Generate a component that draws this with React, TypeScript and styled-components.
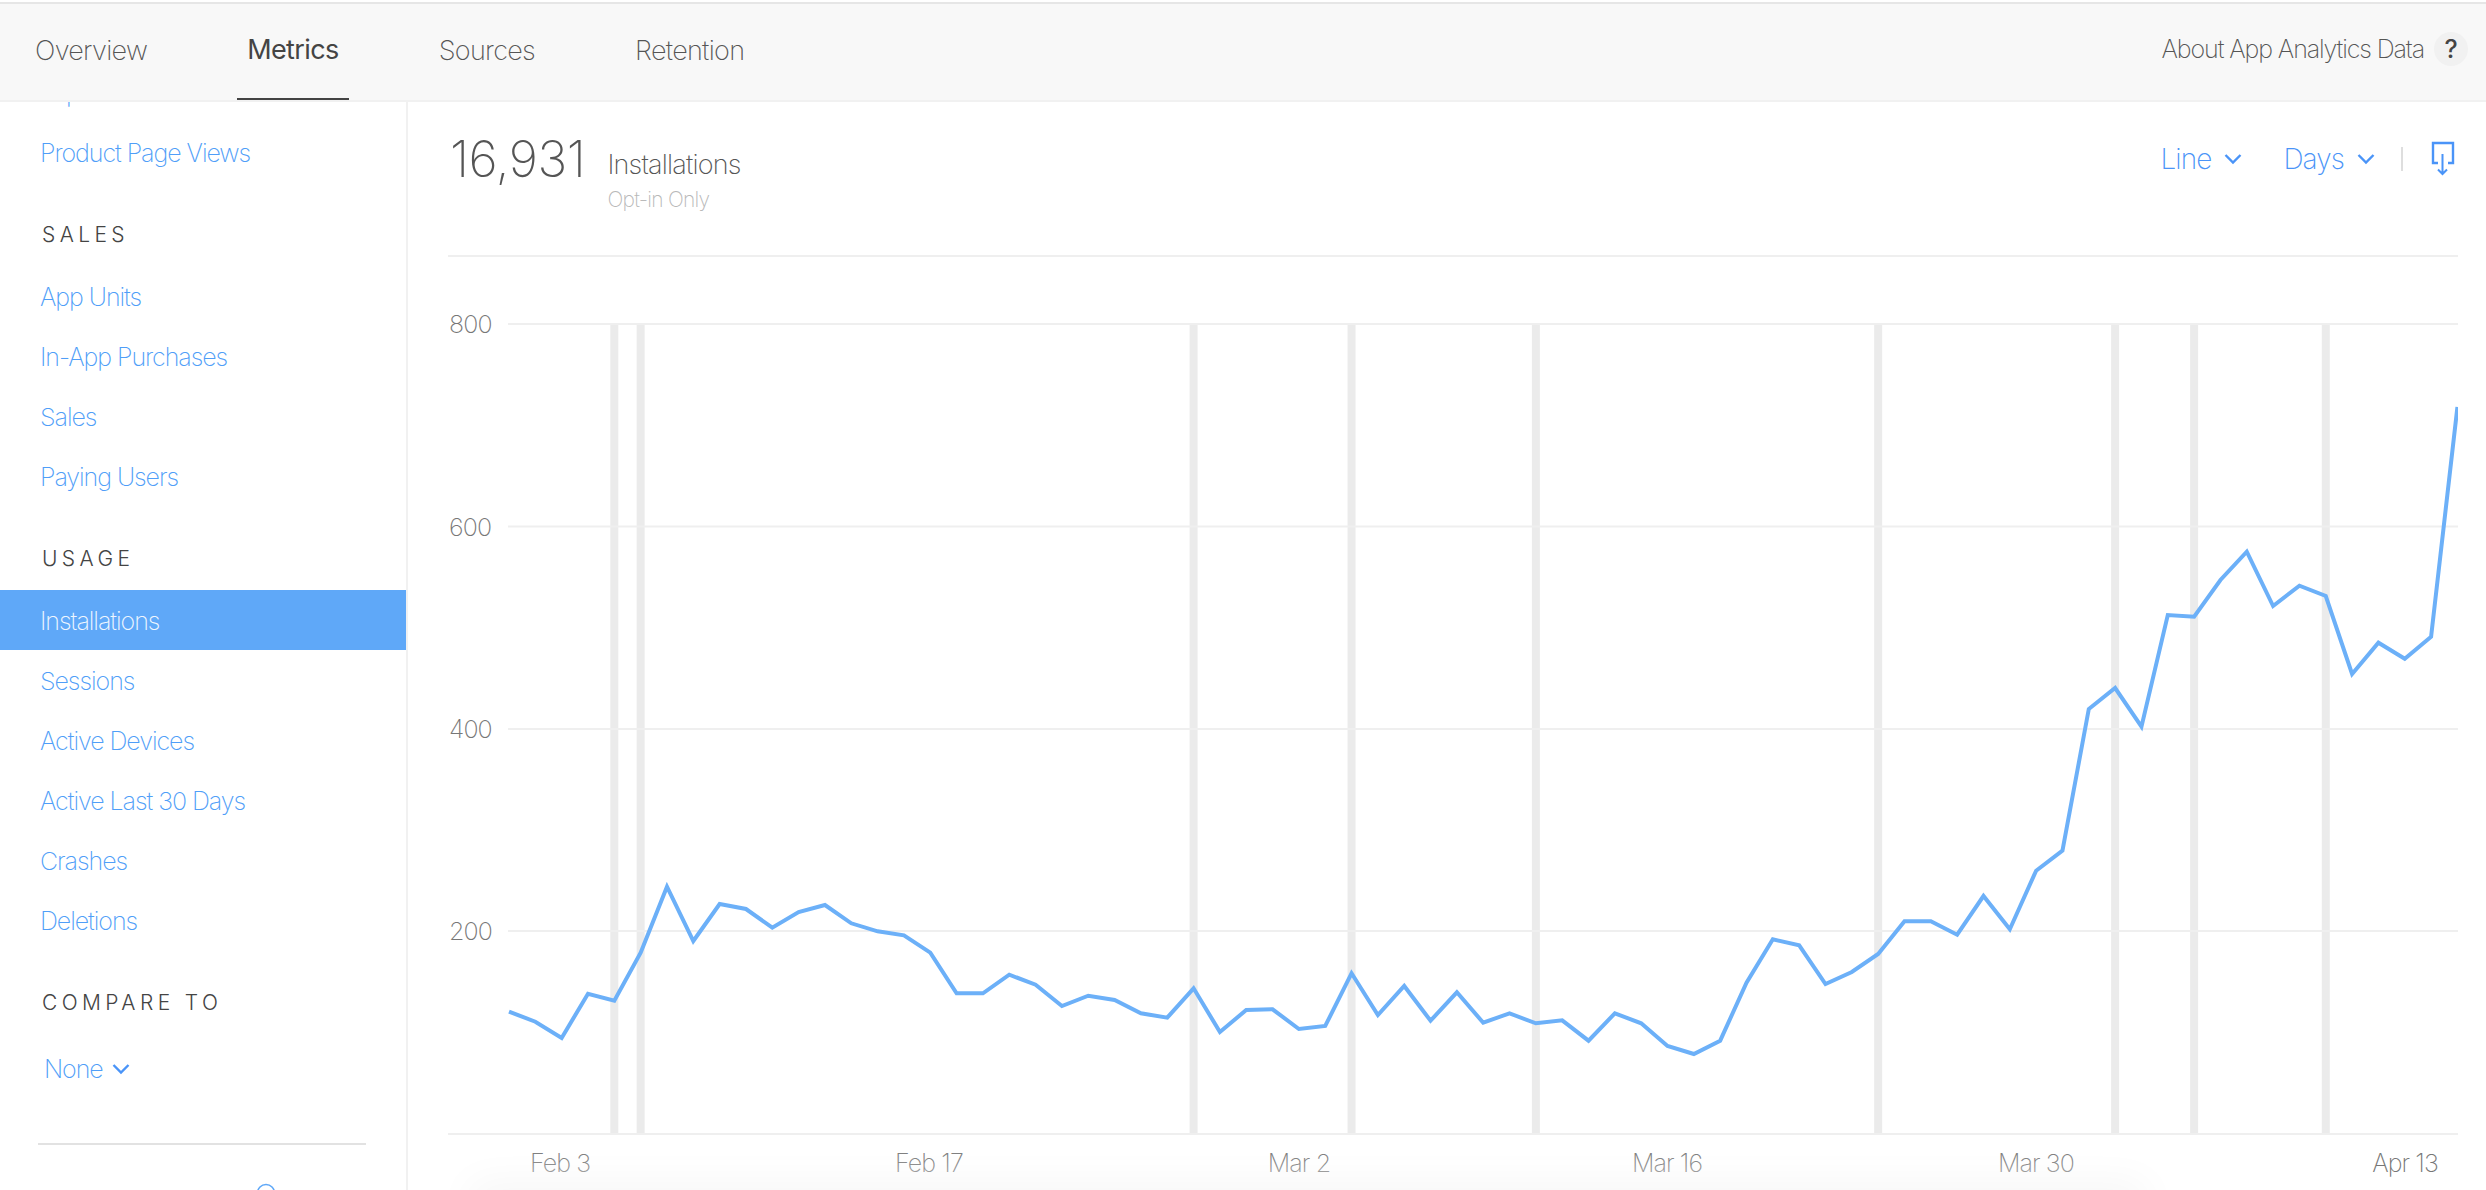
import React from "react";
import styled, { createGlobalStyle } from "styled-components";

const FONT = `Inter, "Liberation Sans", Arial, sans-serif`;
const LINK = "#5fa8f8";
const ACCENT = "#4a94f8";

const Global = createGlobalStyle`
  html, body { margin: 0; padding: 0; background: #fff; overflow: hidden; }
  body { font-family: ${FONT}; font-weight: 200; }
  * { box-sizing: border-box; }
`;

const Page = styled.div`
  width: 2486px; height: 1190px; padding-top: 2px;
  display: flex; flex-direction: column; overflow: hidden;
`;
const TopBar = styled.header`
  height: 100px; flex: none; display: flex; align-items: stretch; justify-content: space-between;
  background: #f8f8f8; border-top: 2px solid #e6e6e6; border-bottom: 2px solid #f1f1f1;
  padding: 0 18px 0 25px;
`;
const Tabs = styled.nav`display: flex; gap: 80px;`;
const Tab = styled.a<{ $active?: boolean }>`
  display: flex; align-items: center; padding: 0 10px 4px;
  font-size: 27px;
  letter-spacing: ${p => (p.$active ? "-0.6px" : "-0.7px")};
  color: ${p => (p.$active ? "#444" : "#555")};
  font-weight: ${p => (p.$active ? 400 : 200)};
  border-bottom: 2px solid ${p => (p.$active ? "#444" : "transparent")};
  padding-top: ${p => (p.$active ? "0" : "3px")};
`;
const About = styled.div`
  display: flex; align-items: center; gap: 10px; padding-bottom: 6px;
  font-size: 25px; letter-spacing: -1.1px; color: #555;
`;
const Help = styled.span`
  width: 34px; height: 34px; border-radius: 50%; background: #f1f1f1;
  display: flex; align-items: center; justify-content: center;
  font-size: 25px; font-weight: 500; color: #444; letter-spacing: 0;
`;
const Body = styled.div`flex: 1; display: flex; min-height: 0;`;
const Sidebar = styled.aside`
  width: 408px; flex: none; border-right: 2px solid #f1f1f1; overflow: hidden;
`;
const SideInner = styled.div`margin-top: -40px;`;
const NavItem = styled.a<{ $active?: boolean }>`
  display: flex; align-items: center; height: 60px; padding: 2px 0 0 40px;
  font-size: 25px; letter-spacing: -1.05px;
  color: ${p => (p.$active ? "#eef6ff" : "#4f9ef8")};
  background: ${p => (p.$active ? LINK : "transparent")};
`;
const SectionTitle = styled.h3`
  margin: 0; padding: 39px 0 17px 42px; line-height: 28px;
  font-size: 21px; font-weight: 300; letter-spacing: 4.4px; color: #444;
`;
const CompareValue = styled.a`
  display: flex; align-items: center; gap: 9px; height: 60px; margin-top: 5px; padding: 0 0 0 44px;
  font-size: 25px; letter-spacing: -1.05px; color: #4f9ef8;
`;
const SideRule = styled.div`
  height: 2px; margin: 44px 40px 0 38px; background: #e2e2e2;
`;
const SideIcon = styled.svg`display: block; margin: 38px 0 0 256px; width: 20px; height: 20px;`;
const Main = styled.main`
  flex: 1; min-width: 0; position: relative; overflow: hidden; padding: 0 28px 0 40px;
`;
const Summary = styled.section`
  height: 155px; display: flex; justify-content: space-between; align-items: flex-start;
  border-bottom: 2px solid #efefef; padding: 29px 3px 0 2px;
`;
const TotalGroup = styled.div`display: flex; align-items: flex-start; gap: 22px;`;
const Total = styled.div`font-size: 50px; line-height: 56px; letter-spacing: -0.4px; color: #555; font-weight: 200;`;
const MetricName = styled.div`
  font-size: 27px; line-height: 32px; margin-top: 18px; letter-spacing: -0.8px; color: #555;
`;
const MetricNote = styled.div`
  font-size: 21px; line-height: 26px; margin-top: 6px; letter-spacing: -0.75px; color: #b8b8b8;
`;
const Controls = styled.div`display: flex; align-items: center; height: 48px; margin-top: 4px;`;
const Select = styled.a<{ $last?: boolean }>`
  display: flex; align-items: center; gap: 13px; margin-right: ${p => (p.$last ? "0" : "41px")};
  font-size: 28px; letter-spacing: -0.9px; color: ${ACCENT};
`;
const ControlRule = styled.span`width: 2px; height: 24px; background: #dedede; margin: 0 28px 0 26px;`;
const ChartSvg = styled.svg`display: block; width: 2010px; height: 931px;`;
const AxisText = styled.text`font-family: ${FONT}; font-weight: 200; font-size: 25px; letter-spacing: -0.9px; fill: #777;`;
const BottomGlow = styled.div`
  position: absolute; left: 70px; width: 1660px; height: 30px; bottom: -30px;
  background: #f6f6f6; box-shadow: 0 0 40px 8px #f6f6f6;
`;

const Chevron = () => (
  <svg width="18" height="12" viewBox="0 0 18 12" fill="none" stroke={ACCENT} strokeWidth="2.4">
    <path d="M1.5 2 L9 9.5 L16.5 2" />
  </svg>
);

const Download = () => (
  <svg width="24" height="36" viewBox="0 0 24 36" fill="none" stroke={ACCENT}>
    <path d="M7 22 H2 V2 H22 V22 H17" strokeWidth="2.4" />
    <path d="M11.5 13 V33 M7 28.5 L11.5 33 L16 28.5" strokeWidth="2" />
  </svg>
);

const Y: number[] = [
  1011.7, 1021.7, 1038, 993.7, 1000.7, 952.7, 886.7, 941, 904, 909, 927.7, 912, 905, 923.3, 931.3, 935.3,
  952.7, 993.3, 993.3, 974.7, 984.7, 1006, 995.7, 1000, 1013.3, 1017.7, 988.3, 1032, 1010, 1009.3, 1029, 1026,
  973.3, 1015, 986, 1020.7, 992.3, 1022.7, 1013.3, 1023.3, 1020.3, 1040.7, 1013.3, 1023.3, 1046, 1054, 1040.7,
  982.7, 939.3, 945.3, 984, 972, 954, 921.3, 921.3, 934.7, 896, 929.3, 870.7, 850.7, 709, 688, 726.7, 615,
  616.7, 580, 551.7, 606, 585.7, 596, 674, 642.7, 658.7, 636.7, 407,
];
const ORIGIN_X = 448;
const ORIGIN_Y = 257;
const px = (i: number) => 509 + i * 26.33 - ORIGIN_X;
const py = (y: number) => y - ORIGIN_Y;
const BANDS = [4, 5, 26, 32, 39, 52, 61, 64, 69];
const GRID = [
  { label: "800", y: 324 },
  { label: "600", y: 526.5 },
  { label: "400", y: 729 },
  { label: "200", y: 931 },
];
const TICKS = [
  { label: "Feb 3", x: 560 },
  { label: "Feb 17", x: 929 },
  { label: "Mar 2", x: 1299 },
  { label: "Mar 16", x: 1667 },
  { label: "Mar 30", x: 2036 },
  { label: "Apr 13", x: 2405 },
];

const Chart = () => (
  <ChartSvg viewBox="0 0 2010 931">
    {BANDS.map(i => (
      <rect key={i} x={px(i) - 4} y={py(324)} width="8" height={1134 - 324} fill="#ebebeb" />
    ))}
    {GRID.map(g => (
      <g key={g.label}>
        <rect x={60} y={py(g.y) - 1} width={1950} height="2" fill="#efefef" />
        <AxisText x={1} y={py(g.y) + 9}>{g.label}</AxisText>
      </g>
    ))}
    <rect x={0} y={py(1134) - 1} width={2010} height="2" fill="#efefef" />
    <polyline
      points={Y.map((y, i) => `${px(i)},${py(y)}`).join(" ")}
      fill="none" stroke="#6cb0f8" strokeWidth="4" strokeLinejoin="miter"
    />
    {TICKS.map(t => (
      <AxisText key={t.label} x={t.x - ORIGIN_X} y={py(1172)} textAnchor="middle">{t.label}</AxisText>
    ))}
  </ChartSvg>
);

export default function App() {
  return (
    <Page>
      <Global />
      <TopBar>
        <Tabs>
          <Tab>Overview</Tab>
          <Tab $active>Metrics</Tab>
          <Tab>Sources</Tab>
          <Tab>Retention</Tab>
        </Tabs>
        <About>
          About App Analytics Data
          <Help>?</Help>
        </About>
      </TopBar>
      <Body>
        <Sidebar>
          <SideInner>
            <NavItem>Impressions</NavItem>
            <NavItem>Product Page Views</NavItem>
            <SectionTitle>SALES</SectionTitle>
            <NavItem>App Units</NavItem>
            <NavItem>In-App Purchases</NavItem>
            <NavItem>Sales</NavItem>
            <NavItem>Paying Users</NavItem>
            <SectionTitle>USAGE</SectionTitle>
            <NavItem $active>Installations</NavItem>
            <NavItem>Sessions</NavItem>
            <NavItem>Active Devices</NavItem>
            <NavItem>Active Last 30 Days</NavItem>
            <NavItem>Crashes</NavItem>
            <NavItem>Deletions</NavItem>
            <SectionTitle>COMPARE TO</SectionTitle>
            <CompareValue>None <Chevron /></CompareValue>
            <SideRule />
            <SideIcon viewBox="0 0 20 20" fill="none" stroke={LINK} strokeWidth="1.6">
              <circle cx="10" cy="10" r="8.5" />
            </SideIcon>
          </SideInner>
        </Sidebar>
        <Main>
          <Summary>
            <TotalGroup>
              <Total>16,931</Total>
              <div>
                <MetricName>Installations</MetricName>
                <MetricNote>Opt-in Only</MetricNote>
              </div>
            </TotalGroup>
            <Controls>
              <Select>Line <Chevron /></Select>
              <Select $last>Days <Chevron /></Select>
              <ControlRule />
              <Download />
            </Controls>
          </Summary>
          <Chart />
          <BottomGlow />
        </Main>
      </Body>
    </Page>
  );
}
